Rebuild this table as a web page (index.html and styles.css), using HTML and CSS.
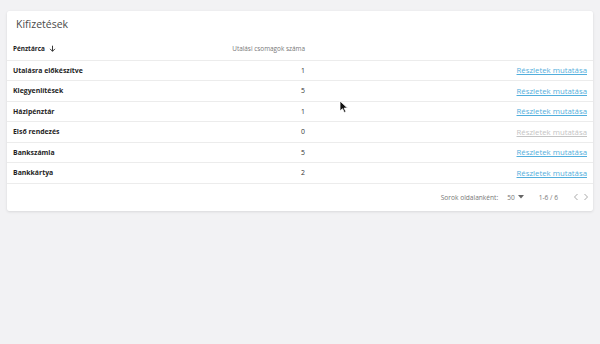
FILE: index.html
```
<!DOCTYPE html>
<html lang="hu">
<head>
<meta charset="utf-8">
<title>Kifizetések</title>
<link rel="stylesheet" href="styles.css">
</head>
<body>
<div class="card">
  <div class="title">Kifizetések</div>
  <div class="row head">
    <div class="c1">Pénztárca <svg class="sort" width="7" height="7" viewBox="0 0 10 10"><path d="M5 1v8M1.5 5.5L5 9l3.5-3.5" fill="none" stroke="#333" stroke-width="1.4"/></svg></div>
    <div class="c2">Utalási csomagok száma</div>
    <div class="c3"></div>
  </div>
  <div class="row"><div class="c1">Utalásra előkészítve</div><div class="c2">1</div><div class="c3"><a href="#">Részletek mutatása</a></div></div>
  <div class="row"><div class="c1">Kiegyenlítések</div><div class="c2">5</div><div class="c3"><a href="#">Részletek mutatása</a></div></div>
  <div class="row"><div class="c1">Házipénztár</div><div class="c2">1</div><div class="c3"><a href="#">Részletek mutatása</a></div></div>
  <div class="row"><div class="c1">Első rendezés</div><div class="c2">0</div><div class="c3"><a class="disabled">Részletek mutatása</a></div></div>
  <div class="row"><div class="c1">Bankszámla</div><div class="c2">5</div><div class="c3"><a href="#">Részletek mutatása</a></div></div>
  <div class="row"><div class="c1">Bankkártya</div><div class="c2">2</div><div class="c3"><a href="#">Részletek mutatása</a></div></div>
  <div class="footer">
    <span class="lbl">Sorok oldalanként:</span>
    <span class="sel">50 <svg width="6" height="4" viewBox="0 0 6 4"><path d="M0 0h6L3 3.5z" fill="#666"/></svg></span>
    <span class="range">1-6 / 6</span>
    <span class="nav">
      <svg width="6" height="8" viewBox="0 0 6 8"><path d="M4.5 1L1.5 4l3 3" fill="none" stroke="#aaa" stroke-width="1"/></svg>
      <svg width="6" height="8" viewBox="0 0 6 8"><path d="M1.5 1l3 3-3 3" fill="none" stroke="#aaa" stroke-width="1"/></svg>
    </span>
  </div>
</div>
<svg class="cursor" width="9" height="13" viewBox="0 0 9 13"><path d="M1 1v10l2.5-2.3 1.8 3.8 1.6-.8-1.8-3.6H8.5z" fill="#111" stroke="#fff" stroke-width="0.8"/></svg>
</body>
</html>
```
FILE: styles.css
```
html, body {
  margin: 0;
  padding: 0;
}
body {
  background: #f2f2f4;
  font-family: "Open Sans", "Liberation Sans", sans-serif;
  color: #222;
  width: 600px;
  height: 344px;
  position: relative;
  overflow: hidden;
}
.card {
  margin: 11px 7px 0 7px;
  background: #fff;
  border-radius: 2px;
  box-shadow: 0 1px 3px rgba(0,0,0,0.10), 0 0 1px rgba(0,0,0,0.06);
}
.title {
  height: 27px;
  line-height: 27px;
  padding-left: 9px;
  font-size: 10.5px;
  color: #4a4a4a;
}
.row {
  display: grid;
  grid-template-columns: 206px 86px 1fr;
  padding: 0 6px;
  height: 20.5px;
  align-items: center;
  border-bottom: 1px solid #ececec;
  font-size: 6.9px;
  box-sizing: border-box;
}
.row.head {
  height: 22.5px;
  font-size: 6.4px;
}
.row .c1 {
  font-weight: 700;
  color: #1e1e1e;
}
.head .c1 {
  display: flex;
  align-items: center;
  gap: 4px;
}
.head .c2 {
  color: #777;
  font-weight: 400;
}
.c2 {
  text-align: right;
  color: #333;
}
.c3 {
  text-align: right;
}
.c3 a {
  font-size: 7.8px;
  color: #52aedc;
  text-decoration: underline;
}
.c3 a.disabled {
  color: #c4c4c4;
}
.footer {
  height: 27px;
  display: flex;
  align-items: center;
  justify-content: flex-end;
  padding-right: 4px;
  font-size: 6.6px;
  color: #777;
}
.lbl {
  margin-right: 9px;
}
.sel {
  display: flex;
  align-items: center;
  gap: 3px;
  margin-right: 15px;
}
.range {
  margin-right: 15px;
}
.nav {
  display: flex;
  gap: 4px;
}
.cursor {
  position: absolute;
  left: 339px;
  top: 100px;
}
```
